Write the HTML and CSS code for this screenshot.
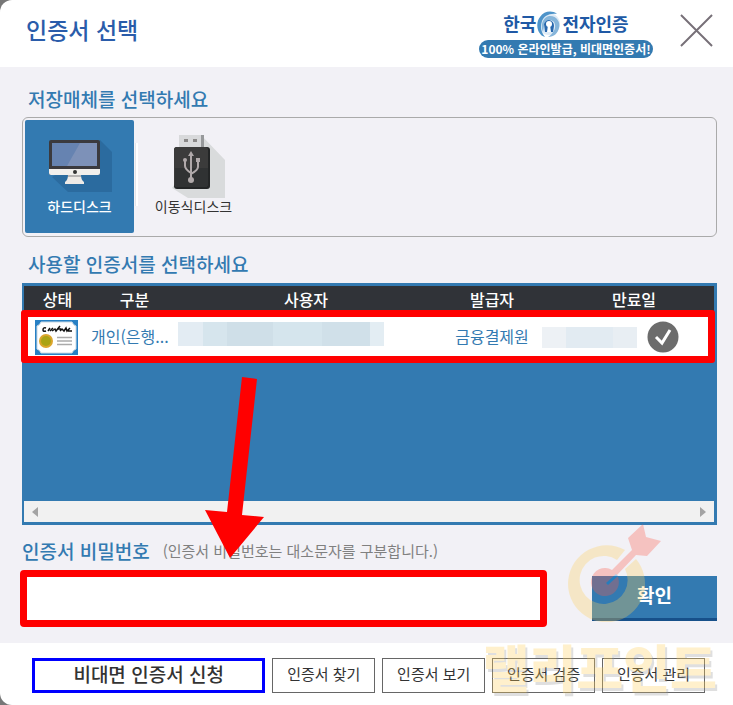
FILE: index.html
```html
<!DOCTYPE html>
<html lang="ko">
<head>
<meta charset="utf-8">
<meta name="viewport" content="width=device-width, initial-scale=1">
<title>인증서 선택</title>
<link rel="stylesheet" href="styles.css">
</head>
<body>
<div class="dialog">
  <header class="header">
    <h1 class="title">인증서 선택</h1>
    <div class="brand">
      <div class="brand-name">
        <span>한국</span>
        <svg class="brand-mark" viewBox="0 0 26 28" aria-hidden="true">
          <circle cx="13" cy="14" r="11" fill="#dfebf6"/>
          <path d="M9 27C1 25-1 13 4 7C8 1 16 0 21 4C13 3 8 6 6 11C4 17 5 22 9 27Z" fill="#4d93c9"/>
          <path d="M7 22C4 15 7 7 13 6C20 5 25 12 23 18C22 23 18 27 12 27C18 23 21 17 18 12C15 9 9 10 8 16Z" fill="#86b5da"/>
          <path d="M8 14Q10 10 13 10Q18 11 18 16L17 22H14V17Q13 15 12 17V22H9Z" fill="#2868ae"/>
          <circle cx="13" cy="14" r="3" fill="#fff"/>
          <path d="M12 15H14L15 22H11Z" fill="#fff"/>
        </svg>
        <span class="brand-second">전자인증</span>
      </div>
      <div class="brand-tag">100% 온라인발급, 비대면인증서!</div>
    </div>
    <button class="close" type="button" aria-label="닫기">
      <svg viewBox="0 0 34 34" aria-hidden="true"><path d="M1 1L33 33M33 1L1 33" stroke="#777078" stroke-width="2" fill="none"/></svg>
    </button>
  </header>

  <main class="content">
    <h2 class="section-title">저장매체를 선택하세요</h2>
    <div class="media">
      <button class="media-item selected" type="button">
        <svg class="media-icon" viewBox="0 0 66 64" aria-hidden="true">
          <path d="M53 6L65 18V58H21L5 43L35 24Z" fill="#2b6b9f"/>
          <rect x="2" y="6" width="51" height="35" rx="2" fill="#3b3a3e"/>
          <rect x="5" y="9" width="45" height="23" fill="#6683b1"/>
          <path d="M33 9H50V32H20Z" fill="#7d91b8"/>
          <path d="M2 35H53V39Q53 41 51 41H4Q2 41 2 39Z" fill="#f1efec"/>
          <circle cx="28" cy="38" r="2" fill="#333"/>
          <path d="M21 41H34Q34 46 37 48V50H18V48Q21 46 21 41Z" fill="#eeeae6"/>
          <path d="M21 41H34L34 43H21Z" fill="#b8b5b4"/>
        </svg>
        <span>하드디스크</span>
      </button>
      <i class="divider"></i>
      <button class="media-item" type="button">
        <svg class="media-icon" viewBox="0 0 66 64" aria-hidden="true">
          <path d="M41 2L64 26V64H27L11 54L43 12Z" fill="#d9dbdc"/>
          <rect x="18" y="1" width="25" height="16" fill="#97999b"/>
          <rect x="18" y="1" width="22" height="16" fill="#d8d9db"/>
          <path d="M23 5H27V8H23ZM32 5H36V8H32Z" fill="#8a8888"/>
          <rect x="13" y="13" width="36" height="42" rx="3" fill="#232526"/>
          <rect x="13" y="13" width="34" height="40" rx="3" fill="#3b3b3b"/>
          <path d="M14 34H47V50Q47 53 44 53H17Q14 53 14 50Z" fill="#303233"/>
          <g fill="none" stroke="#b0a9aa" stroke-width="2"><path d="M30 45V21M24 27V32Q24 35 30 39M37 27V33Q37 36 30 40"/></g>
          <g fill="#b0a9aa"><path d="M27 22L30 17L33 22Z"/><circle cx="24" cy="26" r="2"/><rect x="35" y="24" width="4" height="4"/><circle cx="30" cy="46" r="3"/></g>
        </svg>
        <span>이동식디스크</span>
      </button>
    </div>

    <h2 class="section-title list-title">사용할 인증서를 선택하세요</h2>
    <div class="list">
      <table class="certs">
        <colgroup><col class="c-state"><col class="c-type"><col><col class="c-issuer"><col class="c-expiry"></colgroup>
        <thead>
          <tr><th>상태</th><th>구분</th><th class="h-user">사용자</th><th>발급자</th><th class="h-expiry">만료일</th></tr>
        </thead>
        <tbody>
          <tr>
            <td class="state">
              <svg class="cert-icon" viewBox="0 0 43 35" aria-hidden="true">
                <rect width="43" height="35" fill="#2780c4"/>
                <path d="M6 2H37Q38 5 41 6V29Q38 30 37 33H6Q5 30 2 29V6Q5 5 6 2Z" fill="#fff" stroke="#c8d8e4"/>
                <path d="M11 8Q8 7 8 10Q8 12 11 11M13 11L15 8M15 11L18 8M17 11L20 9L21 11L25 6M22 9H26M25 11L27 9L29 11L31 8L32 11L35 8M33 11H37" fill="none" stroke="#111" stroke-width="1.5"/>
                <circle cx="11" cy="21" r="7" fill="#dba52c"/><circle cx="11" cy="21" r="5" fill="#aaa315"/>
                <path d="M22 17.500H37M22 21H37M22 24.500H37" stroke="#aaa" stroke-width="1.500"/>
              </svg>
            </td>
            <td class="type">개인(은행...</td>
            <td><div class="mask mask-user"></div></td>
            <td class="issuer">금융결제원</td>
            <td>
              <div class="expiry">
                <div class="mask mask-date"></div>
                <svg class="check" viewBox="0 0 32 32" aria-hidden="true"><circle cx="16" cy="16" r="15.500" fill="#6c6c6c"/><path d="M9 16L15 22L23 9" fill="none" stroke="#fff" stroke-width="3"/></svg>
              </div>
            </td>
          </tr>
        </tbody>
      </table>
      <div class="scrollbar">
        <svg viewBox="0 0 6 10" aria-hidden="true"><path d="M6 0V10L0 5Z" fill="#a3a3a3"/></svg>
        <svg viewBox="0 0 6 10" aria-hidden="true"><path d="M0 0V10L6 5Z" fill="#a3a3a3"/></svg>
      </div>
      <div class="row-highlight"></div>
      <svg class="arrow" viewBox="0 0 60 181" aria-hidden="true"><path d="M37 0L52 2L37 138L59 140L25 181L0 133L22 135Z" fill="#f00"/></svg>
    </div>

    <div class="password-label">
      <label for="password">인증서 비밀번호</label>
      <span>(인증서 비밀번호는 대소문자를 구분합니다.)</span>
    </div>
    <div class="password-row">
      <input class="password" id="password" type="password">
      <button class="confirm" type="button">확인</button>
    </div>
  </main>

  <footer class="footer">
    <button class="action primary" type="button">비대면 인증서 신청</button>
    <button class="action" type="button">인증서 찾기</button>
    <button class="action" type="button">인증서 보기</button>
    <button class="action" type="button">인증서 검증</button>
    <button class="action" type="button">인증서 관리</button>
    <div class="watermark">
      <svg class="target" viewBox="0 0 96 98" aria-hidden="true">
        <path d="M58 26A38.500 38.500 0 1 0 69 35L58 45A24 24 0 1 1 50 36Z" fill="#ffd05a"/>
        <path d="M45 46L65 26L61 14L76 0L79 13L94 17L80 32L69 31L50 51A14 14 0 1 1 45 46Z" fill="#ff5747"/>
        <path d="M40 60L50 51" stroke="#0a84d8" stroke-width="3"/>
      </svg>
      <span>랠리포인트</span>
    </div>
  </footer>
</div>
</body>
</html>
```
FILE: styles.css
```css
* { box-sizing: border-box; }

body {
  margin: 0;
  background: #777;
  color: #333;
  font-family: "Noto Sans CJK KR", "Noto Sans", sans-serif;
}

button, input { font-family: inherit; }
button { padding: 0; border: 0; background: none; color: inherit; cursor: pointer; }
h1, h2 { margin: 0; font-weight: 500; }
svg { display: block; }

.dialog {
  min-height: 100vh;
  overflow: hidden;
  border-radius: 12px 0 0 12px;
  background: #fff;
}

.header {
  display: flex;
  align-items: flex-start;
  height: 67px;
  padding: 12px 20px 0 26px;
}
.title { flex: 1; color: #2a5caa; font-size: 23px; line-height: 34px; }

.brand { width: 174px; margin-right: 27px; }
.brand-name {
  display: flex;
  align-items: center;
  justify-content: center;
  height: 28px;
  color: #2059a5;
  font-size: 18px;
  font-weight: 700;
  line-height: 24px;
}
.brand-name span { margin-bottom: 6px; }
.brand-mark { width: 26px; height: 28px; margin-bottom: 4px; }
.brand-tag {
  border-radius: 9px;
  background: #337ab1;
  color: #fff;
  font-size: 12px;
  font-weight: 700;
  line-height: 18px;
  text-align: center;
  white-space: nowrap;
}
.close { width: 33px; height: 33px; margin-top: 2px; }

.content { padding: 17px 16px 16px 22px; background: #f2f1f6; }
.section-title { padding-left: 6px; color: #337ab1; font-size: 19px; line-height: 30px; }
.list-title { margin-top: 12px; }

.media {
  display: flex;
  height: 120px;
  margin-top: 3px;
  padding: 2px;
  border: 1px solid #aaa;
  border-radius: 6px;
}
.media-item {
  display: flex;
  flex-direction: column;
  align-items: center;
  width: 109px;
  height: 113px;
  padding-top: 14px;
  border-radius: 2px;
  font-size: 14px;
  line-height: 16px;
}
.media-item.selected { background: #337ab1; color: #fff; font-weight: 500; }
.media-icon { width: 66px; height: 64px; }
.divider { width: 3px; height: 63px; margin: 23px 1px 0; background: #fff; border-left: 1px solid #e4e4e8; }

.list {
  position: relative;
  height: 242px;
  margin-top: 4px;
  display: flex;
  flex-direction: column;
  justify-content: space-between;
  border: solid #337ab1;
  border-width: 3px 3px 3px 2px;
  background: #337ab1;
}
.certs { width: 100%; table-layout: fixed; border-collapse: collapse; }
.c-state { width: 67px; }
.c-type { width: 87px; }
.c-issuer { width: 100px; }
.c-expiry { width: 172px; }
.certs th {
  height: 28px;
  padding: 0;
  background: #303338;
  color: #fff;
  font-size: 16px;
  font-weight: 500;
  line-height: 26px;
  vertical-align: top;
}
.certs .h-user { padding-right: 8px; }
.certs .h-expiry { padding-left: 12px; }
.certs td {
  height: 46px;
  padding: 0;
  background: #fff;
  color: #337ab1;
  font-size: 16px;
  line-height: 24px;
  white-space: nowrap;
}
.certs .state { padding-left: 11px; }
.certs .type, .certs .issuer { padding-bottom: 3px; }
.certs .issuer { text-align: center; }
.cert-icon { width: 43px; height: 35px; }
.mask { background: linear-gradient(90deg, #e3ecf3 0 12%, #d6e5ed 12% 24%, #cfdfe8 24% 46%, #d5e5ed 46% 70%, #d0e0e9 70% 93%, #e3edf3 93%); }
.mask-user { width: 206px; max-width: 100%; height: 24px; margin-bottom: 6px; }
.mask-date { width: 95px; height: 21px; background: linear-gradient(90deg, #edf1f5 0 25%, #e2ebf2 25% 75%, #e8eef3 75%); }
.expiry { display: flex; align-items: center; gap: 10px; }
.check { width: 32px; height: 32px; }

.scrollbar {
  display: flex;
  align-items: center;
  justify-content: space-between;
  height: 21px;
  padding: 0 8px;
  background: #f1f1f1;
}
.scrollbar svg { width: 6px; height: 10px; }

.row-highlight {
  position: absolute;
  top: 24px;
  right: -1px;
  left: -3px;
  height: 53px;
  border: 7px solid #f00;
  border-radius: 3px;
}
.arrow {
  position: absolute;
  z-index: 1;
  top: 91px;
  left: 181px;
  width: 60px;
  height: 181px;
}

.password-label {
  display: flex;
  align-items: center;
  gap: 13px;
  margin-top: 11px;
  line-height: 30px;
}
.password-label label { color: #337ab1; font-size: 19px; font-weight: 500; }
.password-label span { color: #808080; font-size: 15px; }
.password-row { display: flex; align-items: center; gap: 45px; margin: 4px 0 0 -2px; }
.password {
  flex: 1;
  min-width: 0;
  height: 57px;
  padding: 0 10px;
  border: 7px solid #f00;
  border-radius: 4px;
  background: #fff;
  outline: 0;
  font-size: 19px;
}
.confirm {
  width: 125px;
  height: 45px;
  border-bottom: 3px solid #17508a;
  background: #337ab1;
  color: #fff;
  font-size: 19px;
  font-weight: 700;
  line-height: 34px;
  padding-bottom: 4px;
}

.footer {
  position: relative;
  display: flex;
  gap: 7px;
  padding: 15px 28px 12px 32px;
}
.action {
  flex: 103 1 0;
  height: 35px;
  padding-bottom: 3px;
  border: 1px solid #666;
  font-size: 15px;
  line-height: 28px;
  white-space: nowrap;
}
.action.primary { flex-grow: 232; border: 3px solid #00f; font-size: 19px; font-weight: 500; line-height: 26px; }

.watermark {
  position: absolute;
  right: 16px;
  bottom: 9px;
  display: flex;
  flex-direction: column;
  opacity: .3;
  pointer-events: none;
  color: #ffd05a;
  font-size: 51px;
  font-weight: 900;
  line-height: 60px;
  text-shadow: 2px 3px 0 #999;
}
.target { width: 96px; height: 98px; margin: 0 0 14px 85px; }
```
